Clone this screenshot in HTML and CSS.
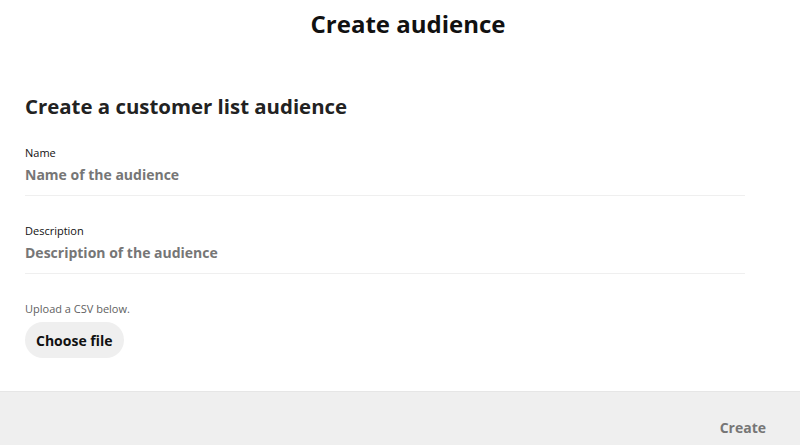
FILE: index.html
```html
<!DOCTYPE html>
<html lang="en">
<head>
    <meta charset="UTF-8">
    <title>Create audience</title>
    <link rel="stylesheet" href="styles.css">
</head>
<body>
<div class="modal">
    <h1 class="modal-title">Create audience</h1>
    <main class="modal-body">
        <h2 class="section-title">Create a customer list audience</h2>
        <label class="field">
            <span class="field-label">Name</span>
            <input class="field-input" type="text" placeholder="Name of the audience">
        </label>
        <label class="field">
            <span class="field-label">Description</span>
            <input class="field-input" type="text" placeholder="Description of the audience">
        </label>
        <p class="upload-hint">Upload a CSV below.</p>
        <button class="file-button">Choose file</button>
    </main>
    <footer class="modal-footer">
        <button class="create-button" disabled>Create</button>
    </footer>
</div>
</body>
</html>
```

FILE: styles.css
```css
body {
    margin: 0;
    font-family: "Open Sans", "Noto Sans", sans-serif;
    color: #111;
    background: #fff;
}
.modal {
    display: flex;
    flex-direction: column;
    height: 445px;
}
.modal-title {
    margin: 0;
    padding: 6px 0 0 16px;
    text-align: center;
    font-size: 24px;
    font-weight: 700;
    line-height: 36px;
}
.modal-body {
    flex: 1;
    padding: 49px 55px 0 25px;
}
.section-title {
    margin: 0 0 24px;
    font-size: 20.4px;
    font-weight: 700;
    line-height: 30px;
    color: #222;
}
.field {
    display: flex;
    flex-direction: column;
    border-bottom: 1px solid #efefef;
    margin-bottom: 27px;
}
.field-label {
    font-size: 11px;
    line-height: 16px;
}
.field-input {
    border: none;
    outline: none;
    padding: 4px 0 11px;
    font-family: inherit;
    font-size: 14px;
    font-weight: 700;
    color: #111;
    background: transparent;
}
.field-input::placeholder {
    color: #767676;
}
.upload-hint {
    margin: 0 0 5px;
    font-size: 11px;
    line-height: 16px;
    color: #5f5f5f;
}
.file-button {
    border: none;
    border-radius: 18px;
    padding: 0 11px;
    height: 36px;
    font-family: inherit;
    font-size: 14px;
    font-weight: 700;
    color: #111;
    background: #efefef;
}
.modal-footer {
    display: flex;
    justify-content: flex-end;
    height: 53px;
    background: #efefef;
    border-top: 1px solid #e6e6e6;
}
.create-button {
    align-self: flex-end;
    margin: 0 34px 8px 0;
    border: none;
    padding: 0;
    font-family: inherit;
    font-size: 14px;
    font-weight: 700;
    color: #767676;
    background: transparent;
}
```
